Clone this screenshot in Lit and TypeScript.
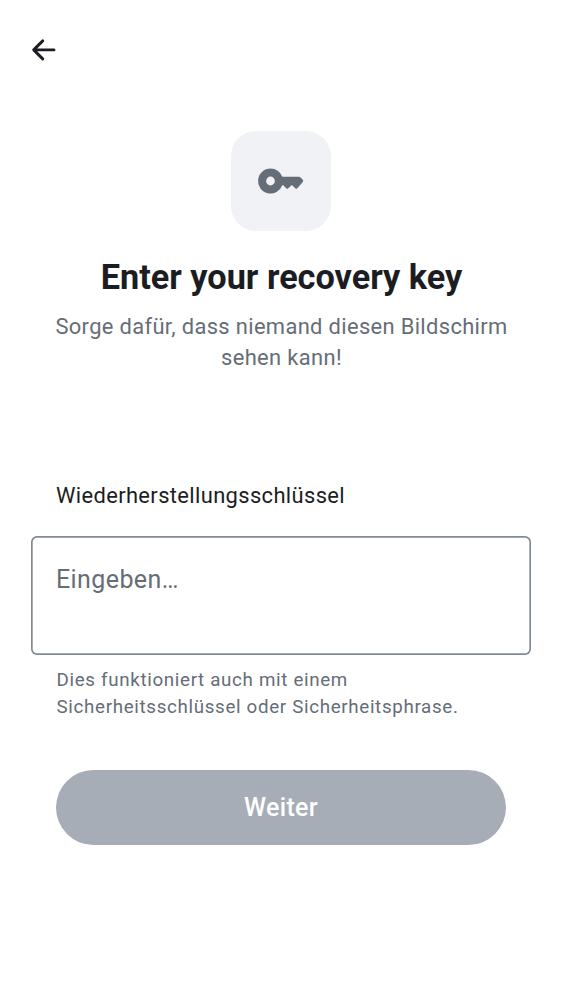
import { LitElement, html, css } from "lit";
import { customElement } from "lit/decorators.js";

@customElement("app-root")
export class AppRoot extends LitElement {
  static styles = css`
    :host {
      display: flex;
      flex-direction: column;
      box-sizing: border-box;
      width: 100%;
      height: 1000px;
      background: #fff;
      font-family: Roboto, sans-serif;
      color: #1b1d22;
    }
    * { box-sizing: border-box; }
    header { height: 100px; padding: 31px 25px; flex: none; }
    .back { display: block; width: 38px; height: 38px; }
    main { display: flex; flex-direction: column; padding: 31px 31px 0; }
    .tile {
      width: 100px;
      height: 100px;
      border-radius: 25px;
      background: #f0f2f5;
      display: grid;
      place-items: center;
      align-self: center;
    }
    .key { display: block; width: 50px; height: 50px; }
    h1 {
      margin: 24px 0 0;
      padding-left: 1px;
      font-size: 34.25px;
      line-height: 44px;
      font-weight: 700;
      text-align: center;
      white-space: nowrap;
    }
    .sub {
      margin: 12px 0 0;
      padding-left: 1px;
      font-size: 21.9px;
      line-height: 31px;
      letter-spacing: 0.35px;
      color: #656d77;
      text-align: center;
    }
    label {
      margin: 107px 25px 0;
      font-size: 21.9px;
      line-height: 31px;
      letter-spacing: 0.37px;
    }
    .field {
      margin-top: 25px;
      height: 119px;
      box-shadow: inset 0 0 0 1.7px #818a95;
      border-radius: 6px;
      padding: 28px 25px;
      font-size: 25px;
      line-height: 31px;
      letter-spacing: 0.4px;
      color: #656d77;
    }
    .hint {
      margin: 12px 24.5px 0 25.5px;
      font-size: 18.75px;
      line-height: 27px;
      letter-spacing: 0.67px;
      color: #656d77;
    }
    button {
      margin: 49px 25px 0;
      height: 75px;
      border: 0;
      border-radius: 38px;
      background: #a6adb7;
      color: #fff;
      font: 500 25px/31px Roboto, sans-serif;
      letter-spacing: 0.35px;
      padding: 0;
    }
  `;

  render() {
    return html`
      <header>
        <svg class="back" viewBox="0 0 38 38" fill="none" stroke="#1b1d22" stroke-width="2.9" stroke-linecap="round" stroke-linejoin="round" aria-label="Zurück">
          <path d="M17.7 9.9 8.7 18.9 17.7 27.900M8.900 18.900H29"></path>
        </svg>
      </header>
      <main>
        <div class="tile">
          <svg class="key" viewBox="256 156 50 50" fill="#656d77">
            <path fill-rule="evenodd" d="M270.5 168.5a12.5 12.5 0 0 1 11.8 8.300H298.800Q299.800 176.800 300.500 177.500L302.600 179.600Q303.900 180.900 302.600 182.200L297.300 188.200Q296.300 189.200 295.300 188.200L291.800 185.100 288.200 188.200Q287.200 189.200 286.200 188.200L283.200 185.200H282.300A12.500 12.500 0 1 1 270.500 168.500ZM270.500 176.600a4.400 4.400 0 1 0 0 8.800a4.400 4.400 0 1 0 0-8.800Z"></path>
          </svg>
        </div>
        <h1>Enter your recovery key</h1>
        <p class="sub">Sorge dafür, dass niemand diesen Bildschirm<br>sehen kann!</p>
        <label>Wiederherstellungsschlüssel</label>
        <div class="field">Eingeben…</div>
        <p class="hint">Dies funktioniert auch mit einem<br>Sicherheitsschlüssel oder Sicherheitsphrase.</p>
        <button disabled>Weiter</button>
      </main>
    `;
  }
}
